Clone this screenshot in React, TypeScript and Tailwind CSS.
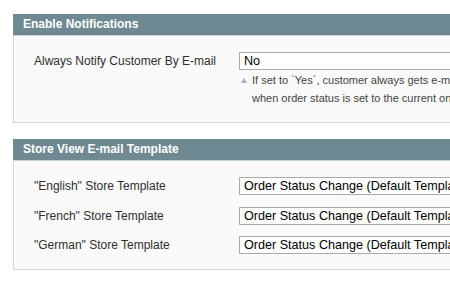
const templates = ['"English" Store Template', '"French" Store Template', '"German" Store Template'];

function Header({ title }: { title: string }) {
  return (
    <div className="h-[22px] bg-[#6f8992] border-b border-[#c9d2d5] pl-[10px] text-[12px] font-bold leading-[21px] text-white">
      {title}
    </div>
  );
}

function Select({ value }: { value: string }) {
  return (
    <div className="h-[18px] w-[280px] shrink-0 border border-[#aaaaaa] bg-white pl-[4px] text-[12.6px] leading-[16px] text-[#000] whitespace-nowrap overflow-hidden">
      {value}
    </div>
  );
}

export default function App() {
  return (
    <div
      className="w-[450px] h-[290px] overflow-hidden bg-white pt-[14px] pl-[13px]"
      style={{ fontFamily: '"Liberation Sans", Arial, sans-serif' }}
    >
      <div className="w-[460px]">
        <Header title="Enable Notifications" />
        <div className="bg-[#fafafa] border-l border-b border-[#d6d6d6] pl-[20px] pt-[16px] pb-[15px]">
          <div className="flex">
            <div className="w-[205px] shrink-0 text-[12px] leading-[18px] text-[#2f2f2f] whitespace-nowrap">
              Always Notify Customer By E-mail
            </div>
            <div className="shrink-0">
              <Select value="No" />
              <div className="relative mt-[1px] pl-[13px] text-[11px] leading-[18px] text-[#444] whitespace-nowrap">
                <span className="absolute left-[2px] top-[7px] w-0 h-0 border-l-[3px] border-r-[3px] border-b-[5px] border-l-transparent border-r-transparent border-b-[#a8b4b9]" />
                <div>If set to `Yes`, customer always gets e-mail notification</div>
                <div>when order status is set to the current one</div>
              </div>
            </div>
          </div>
        </div>

        <div className="mt-[16px]">
          <Header title="Store View E-mail Template" />
          <div className="bg-[#fafafa] border-l border-b border-[#d6d6d6] pl-[20px] pt-[16px] pb-[15px] flex flex-col gap-[11.5px]">
            {templates.map((t) => (
              <div key={t} className="flex items-center">
                <div className="w-[205px] shrink-0 text-[12px] leading-[18px] text-[#2f2f2f]">{t}</div>
                <Select value="Order Status Change (Default Template from Locale)" />
              </div>
            ))}
          </div>
        </div>
      </div>
    </div>
  );
}
